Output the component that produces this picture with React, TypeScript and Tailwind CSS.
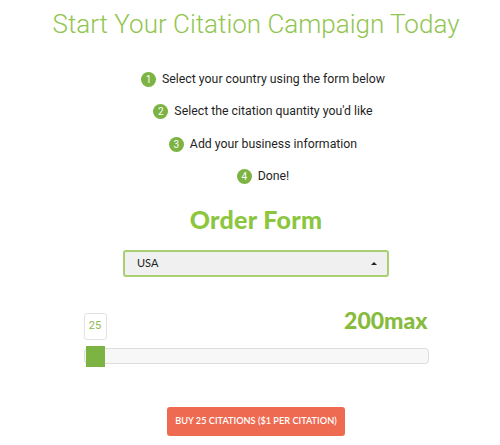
import React from 'react';

const steps = [
  'Select your country using the form below',
  "Select the citation quantity you'd like",
  'Add your business information',
  'Done!',
];

const App = () => {
  return (
    <div className="min-h-screen bg-white pl-3 font-['Roboto',sans-serif]">
      {/* Heading */}
      <h1 className="pt-[7px] text-center text-[26px] font-light leading-[34px] text-[#92c54f]">
        Start Your Citation Campaign Today
      </h1>

      {/* Steps */}
      <ol className="mt-[29px] flex flex-col items-center gap-[14.5px] pl-[14px]">
        {steps.map((s, i) => (
          <li key={i} className="flex h-[18px] items-center gap-[6px] text-[12.3px] text-[#1f1f1f]">
            <span className="flex h-[15px] w-[15px] items-center justify-center rounded-full bg-[#7cb342] text-[10px] text-white">
              {i + 1}
            </span>
            {s}
          </li>
        ))}
      </ol>

      {/* Order form */}
      <h2 className="mt-[18px] text-center font-['Lato',sans-serif] text-[25px] font-black leading-[30px] tracking-[0.3px] text-[#8cc63f]">
        Order Form
      </h2>

      <div className="mt-[16px] flex justify-center">
        <div className="flex h-[27px] w-[266px] items-center justify-between rounded-[3px] border-2 border-[#a9cf72] bg-[#f0f0f0] pl-3 pr-[10px] font-['Lato',sans-serif] text-[11px] text-[#222]">
          <span>USA</span>
          <span className="h-0 w-0 border-x-[3px] border-b-[3px] border-x-transparent border-b-[#222]" />
        </div>
      </div>

      {/* Slider */}
      <div className="mx-auto mt-[30px] w-[345px]">
        <div className="flex items-start justify-between">
          <div className="mt-[6px] flex h-[27px] w-[23px] items-center justify-center rounded-[3px] border border-[#e3e3e3] text-[11px] text-[#8cb84f]">
            25
          </div>
          <div className="mr-[1px] font-['Lato',sans-serif] text-[23px] font-black leading-[26px] text-[#86bb3c]">
            200max
          </div>
        </div>
        <div className="relative mt-[8px] h-[16px] rounded-[4px] border border-[#dcdcdc] bg-[#f7f7f7]">
          <div className="absolute -top-[3px] left-[1px] h-[21px] w-[19px] bg-[#7cb342]" />
        </div>
      </div>

      {/* Button */}
      <div className="mt-[43px] flex justify-center">
        <button className="h-[29px] w-[178px] whitespace-nowrap rounded-[3px] bg-[#ee6b52] font-['Lato',sans-serif] text-[9.2px] font-semibold text-white">
          BUY 25 CITATIONS ($1 PER CITATION)
        </button>
      </div>
    </div>
  );
};

export default App;
